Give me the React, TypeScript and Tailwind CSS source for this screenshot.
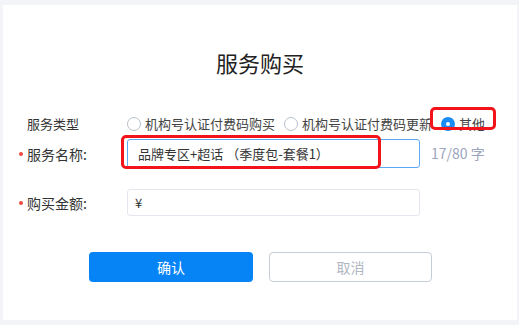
const FONT = "font-['Noto_Sans_CJK_SC','Noto_Sans',sans-serif]";

function Radio({ checked, label }: { checked?: boolean; label: string }) {
  return (
    <label className="flex items-center gap-[4px]">
      {checked ? (
        <span className="w-[14px] h-[14px] rounded-full bg-[#1a8cf5] flex items-center justify-center">
          <span className="w-[4px] h-[4px] rounded-full bg-white" />
        </span>
      ) : (
        <span className="w-[14px] h-[14px] rounded-full border border-[#b9bfc9] bg-white" />
      )}
      <span className="text-[13px] text-[#444] leading-[22px]">{label}</span>
    </label>
  );
}

function Label({ text, required }: { text: string; required?: boolean }) {
  return (
    <div className="flex items-center w-[124px] pl-[16px]">
      <span className={`w-[4px] h-[4px] rounded-full mr-[4px] ${required ? 'bg-[#f0473c]' : 'bg-transparent'}`} />
      <span className={`${required ? 'text-[14px]' : 'text-[13px]'} text-[#333] leading-[22px]`}>{text}</span>
    </div>
  );
}

export default function App() {
  return (
    <div className={`w-[519px] h-[325px] bg-[#f3f4f7] pt-[5px] pl-[3px] overflow-hidden ${FONT}`}>
      <div className="relative w-[514px] h-[315px] bg-white">
        <h1 className="pt-[42px] text-center text-[22px] leading-[30px] text-[#222] font-normal">服务购买</h1>

        <div className="mt-[36px] flex items-center h-[22px]">
          <Label text="服务类型" />
          <div className="flex items-center gap-[9px]">
            <Radio label="机构号认证付费码购买" />
            <Radio label="机构号认证付费码更新" />
            <Radio checked label="其他" />
          </div>
        </div>

        <div className="mt-[4px] flex items-center">
          <Label text="服务名称:" required />
          <div className="w-[293px] h-[29px] border border-[#5ea9f3] rounded-[3px] pl-[10px] flex items-center text-[13px] text-[#333]">
            品牌专区+超话 （季度包-套餐1）
          </div>
          <span className="ml-[11px] text-[14px] text-[#9ba5be]">17/80 字</span>
        </div>

        <div className="mt-[21px] flex items-center">
          <Label text="购买金额:" required />
          <div className="w-[293px] h-[27px] border border-[#e3e6ec] rounded-[3px] pl-[7px] flex items-center text-[13px] text-[#333]">
            ¥
          </div>
        </div>

        <div className="mt-[36px] pl-[86px] flex gap-[16px]">
          <button className="w-[164px] h-[30px] rounded-[4px] bg-[#0684f6] text-white text-[14px]">确认</button>
          <button className="w-[163px] h-[30px] rounded-[4px] border border-[#c7cdd8] bg-white text-[#b0b7c3] text-[14px]">取消</button>
        </div>

        {/* annotation boxes */}
        <div className="absolute left-[118px] top-[130px] w-[260px] h-[34px] border-[3px] border-[#f2141a] rounded-[5px]" />
        <div className="absolute left-[427px] top-[102px] w-[66px] h-[23px] border-[3px] border-[#f2141a] rounded-[5px]" />
      </div>
    </div>
  );
}
